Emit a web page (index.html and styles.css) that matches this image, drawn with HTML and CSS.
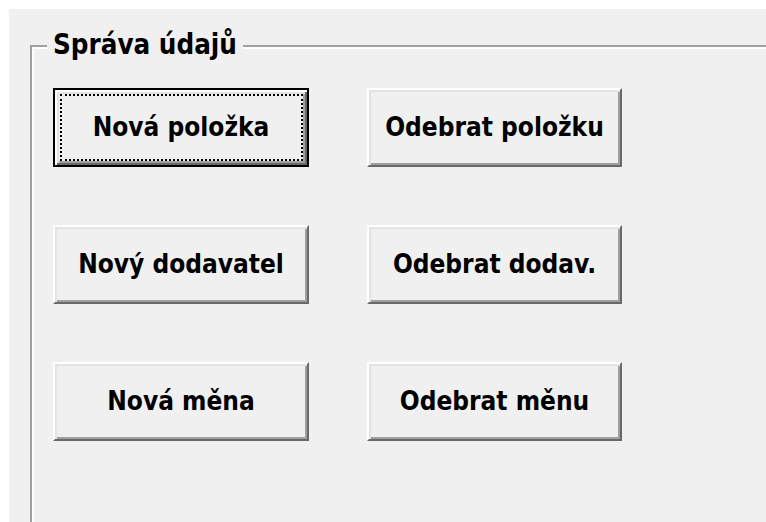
FILE: index.html
```html
<!DOCTYPE html>
<html lang="cs">
<head>
<meta charset="utf-8">
<title>Správa údajů</title>
<link rel="stylesheet" href="styles.css">
</head>
<body>
<div class="window">
  <div class="group">
    <div class="group-title">Správa údajů</div>
    <div class="group-body">
      <div class="button-grid">
        <button class="btn btn-default" type="button">Nová položka</button>
        <button class="btn" type="button">Odebrat položku</button>
        <button class="btn" type="button">Nový dodavatel</button>
        <button class="btn" type="button">Odebrat dodav.</button>
        <button class="btn" type="button">Nová měna</button>
        <button class="btn" type="button">Odebrat měnu</button>
      </div>
    </div>
  </div>
</div>
</body>
</html>
```

FILE: styles.css
```css
html, body {
  margin: 0;
  padding: 0;
  background: #ffffff;
  overflow: hidden;
}

.window {
  margin: 9px 0 0 9px;
  height: 513px;
  box-sizing: border-box;
  padding: 36px 0 0 21px;
  background: #f0f0f0;
  font-family: "DejaVu Sans Condensed", "DejaVu Sans", sans-serif;
  font-stretch: condensed;
  font-weight: bold;
  font-size: 26px;
  color: #000;
}

/* etched group frame: dark line with a white line beside it */
.group {
  position: relative;
  height: 100%;
  box-sizing: border-box;
  border-top: 2px solid #a0a0a0;
  border-left: 2px solid #a0a0a0;
}

.group-body {
  height: 100%;
  box-sizing: border-box;
  border-top: 2px solid #ffffff;
  border-left: 2px solid #ffffff;
  padding: 39px 0 0 19px;
}

.group-title {
  position: absolute;
  left: 15px;
  top: -19px;
  padding: 0 6px;
  font-size: 27.5px;
  line-height: 32px;
  background: #f0f0f0;
}

.button-grid {
  display: grid;
  grid-template-columns: 256px 255px;
  grid-auto-rows: 79px;
  column-gap: 58px;
  row-gap: 58px;
}

/* classic 3D push button */
.btn {
  position: relative;
  margin: 0;
  padding: 0 0 2px;
  font: inherit;
  color: #000;
  background: #f0f0f0;
  border-style: solid;
  border-width: 2px;
  border-color: #ffffff #696969 #696969 #ffffff;
  box-shadow: inset 2px 2px 0 #e3e3e3, inset -2px -2px 0 #a0a0a0;
  outline: none;
  cursor: default;
}

.btn-default {
  border-color: #000;
  box-shadow:
    inset 2px 2px 0 #ffffff,
    inset -2px -2px 0 #696969,
    inset 4px 4px 0 #e3e3e3,
    inset -4px -4px 0 #a0a0a0;
}

/* focus rectangle */
.btn-default::after {
  content: "";
  position: absolute;
  left: 5px;
  top: 4px;
  right: 4px;
  bottom: 4px;
  border: 2px dotted #000;
}
```
